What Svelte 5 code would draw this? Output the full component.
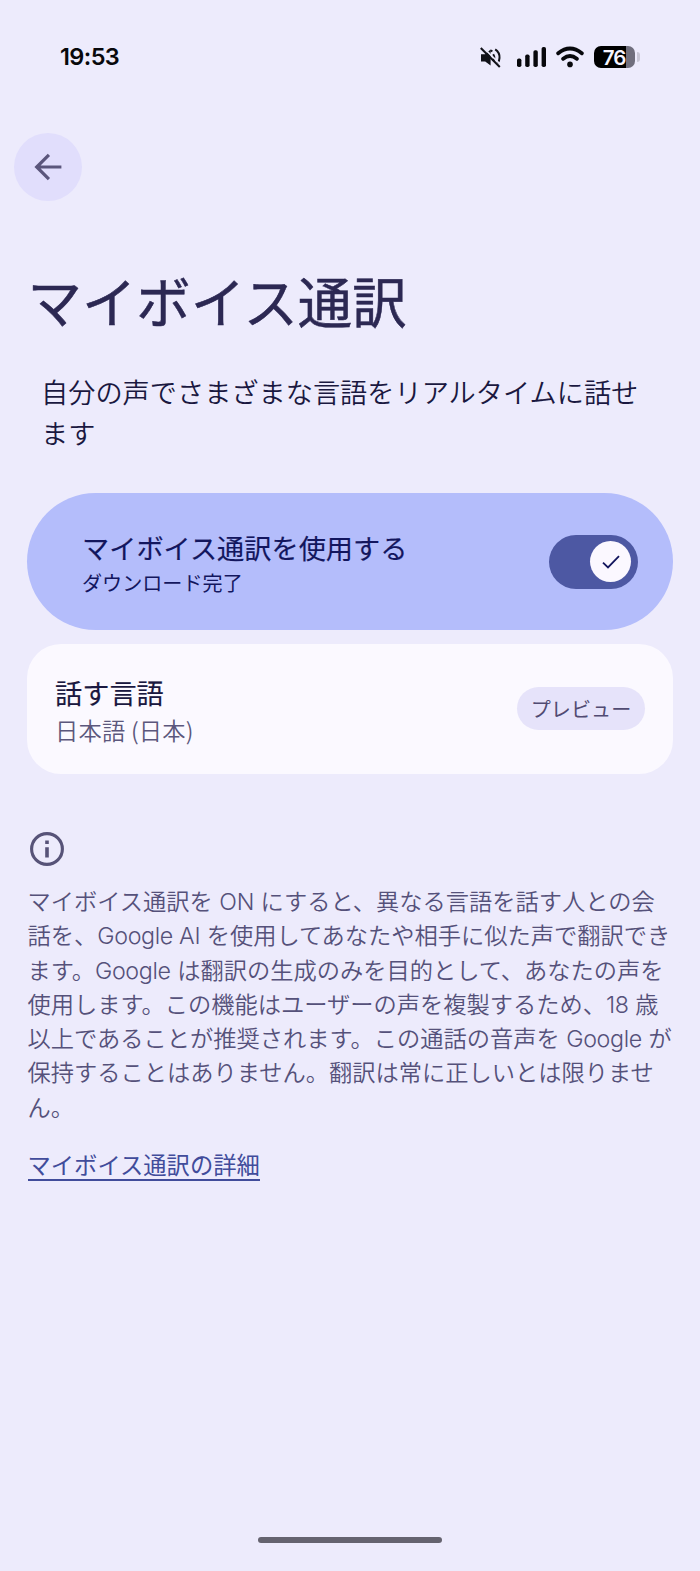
<script>
  let enabled = $state(true);
  const notice = [
    ['マイボイス通訳を ', 'ON', ' にすると、異なる言語を話す人との会'],
    ['話を、', 'Google AI', ' を使用してあなたや相手に似た声で翻訳でき'],
    ['ます。', 'Google', ' は翻訳の生成のみを目的として、あなたの声を'],
    ['使用します。この機能はユーザーの声を複製するため、', '18', ' 歳'],
    ['以上であることが推奨されます。この通話の音声を ', 'Google', ' が'],
    ['保持することはありません。翻訳は常に正しいとは限りませ', '', ''],
    ['ん。', '', '']
  ];
</script>

<div class="screen">
  <header class="status">
    <span class="time">19:53</span>
    <div class="indicators">
      <svg class="mute" width="22" height="22" viewBox="0 0 22 22" fill="none">
        <path d="M1 7.2h4.2L10.6 2.6V18.6L5.2 14.6H1Z" fill="#111118" />
        <path d="M13.2 7.2q2.2 3.5 0 7M15.2 2.4q4.6 3 4.3 8.5q-.1 3-1.8 5.2M10.4 3.4l2 .8" stroke="#111118" stroke-width="2" />
        <path d="M2.6 0L21.6 18.6" stroke="#edebfc" stroke-width="1.6" />
        <path d="M.8 1L19.8 20" stroke="#111118" stroke-width="2" />
      </svg>
      <svg class="signal" width="30" height="22" viewBox="0 0 30 22" fill="#08080c">
        <rect x="0" y="12.5" width="4.4" height="8.5" rx="1.8" />
        <rect x="8.2" y="8.5" width="4.4" height="12.5" rx="1.8" />
        <rect x="16.4" y="4.3" width="4.4" height="16.7" rx="1.8" />
        <rect x="24.6" y="1" width="4.4" height="20" rx="1.8" />
      </svg>
      <svg class="wifi" width="28" height="22" viewBox="0 0 28 22" fill="none" stroke="#08080c" stroke-width="3.9" stroke-linecap="round">
        <path d="M2.2 7.2Q14-2.2 25.8 7.2M7.2 12.8Q14 7.4 20.8 12.8" />
        <circle cx="14" cy="18.4" r="2.8" fill="#08080c" stroke="none" />
      </svg>
      <div class="battery"><span>76</span></div>
      <i class="nub"></i>
    </div>
  </header>

  <button class="back" aria-label="戻る">
    <svg width="28" height="28" viewBox="0 0 28 28" fill="none" stroke="#5b567c" stroke-width="3.2">
      <path d="M14.9 1.8L2.7 14L14.9 26.2M2.7 14H27.4" />
    </svg>
  </button>

  <h1>マイボイス通訳</h1>
  <p class="lead">自分の声でさまざまな言語をリアルタイムに話せ<br />ます</p>

  <section class="card use">
    <div class="labels">
      <h2>マイボイス通訳を使用する</h2>
      <p>ダウンロード完了</p>
    </div>
    <button class="switch" class:on={enabled} role="switch" aria-checked={enabled} aria-label="マイボイス通訳を使用する" onclick={() => (enabled = !enabled)}>
      <span class="thumb">
        <svg width="18" height="14" viewBox="0 0 18 14" fill="none" stroke="#13165e" stroke-width="1.8"><path d="M1 7.6L6 12.5L17 1.2" /></svg>
      </span>
    </button>
  </section>

  <section class="card language">
    <div class="labels">
      <h2>話す言語</h2>
      <p>日本語 (日本)</p>
    </div>
    <button class="preview">プレビュー</button>
  </section>

  <svg class="info" width="34" height="34" viewBox="0 0 34 34">
    <circle cx="17" cy="17" r="15.4" fill="none" stroke="#575378" stroke-width="3.1" />
    <path d="M15.2 8.5h3.6v3.6h-3.6zM15.2 15.2h3.6v10.3h-3.6z" fill="#575378" />
  </svg>

  <div class="notice">
    {#each notice as [before, latin, after]}
      <div>{before}{#if latin}<span class="latin">{latin}</span>{/if}{after}</div>
    {/each}
  </div>

  <div class="more"><a href="#details">マイボイス通訳の詳細</a></div>
  <div class="home"></div>
</div>

<style>
  :global(body) { margin: 0; background: #edebfc; }
  .screen {
    box-sizing: border-box;
    width: 700px;
    height: 1571px;
    padding: 40px 27px 28px;
    display: flex;
    flex-direction: column;
    background: #edebfc;
    color: #1a1840;
    font-family: Inter, "Noto Sans CJK JP", sans-serif;
    overflow: hidden;
  }
  h1, h2, p { margin: 0; font-weight: 400; white-space: nowrap; }
  button { border: 0; padding: 0; font: inherit; display: flex; align-items: center; }
  .status { height: 34px; display: flex; align-items: center; justify-content: space-between; padding: 0 32px 0 33px; }
  .time { font-size: 23.5px; line-height: 30px; margin-top: -1px; font-weight: 600; color: #08080c; letter-spacing: -.6px; }
  .indicators { display: flex; align-items: center; margin-right: 1px; }
  .mute { margin-top: 2px; }
  .signal { margin-left: 15px; }
  .wifi { margin-left: 9px; }
  .battery {
    margin-left: 10px; width: 41px; height: 22px; border-radius: 7px;
    background: linear-gradient(90deg, #000 32px, #706e7d 32px);
    display: flex; align-items: center; justify-content: center;
    color: #f6f4ff; font-size: 20.5px; font-weight: 600; letter-spacing: -1px;
  }
  .battery span { margin-right: 1px; }
  .nub { width: 3px; height: 10px; margin-left: 2px; border-radius: 0 3px 3px 0; background: #c9c7d7; }
  .back { margin: 59px 0 0 -13px; width: 68px; height: 68px; border-radius: 50%; background: #e1defc; justify-content: center; flex: none; }
  h1 { margin: 62px 0 0 .5px; font-size: 54.4px; line-height: 80px; font-weight: 400; color: #2c2853; -webkit-text-stroke: .5px #2c2853; }
  .lead { margin: 31px 0 0 14px; font-size: 27.2px; line-height: 40.5px; font-weight: 350; }
  .card { box-sizing: border-box; width: 646px; display: flex; align-items: center; justify-content: space-between; flex: none; }
  .use { margin-top: 38px; height: 137px; border-radius: 69px; background: #b4bdfb; padding: 0 35px 0 55px; color: #13165e; }
  .use .labels { padding-top: 9px; }
  .use h2 { font-size: 27.2px; line-height: 36px; -webkit-text-stroke: .15px; }
  .use p { font-size: 20.1px; line-height: 32px; }
  .switch { width: 89px; height: 54px; border-radius: 27px; background: #aaa8c3; padding: 0 7px; box-sizing: border-box; }
  .switch.on { background: #4d58a3; justify-content: flex-end; }
  .thumb { width: 41px; height: 41px; border-radius: 50%; background: #fbf8ff; display: flex; align-items: center; justify-content: center; }
  .language { margin-top: 14px; height: 130px; border-radius: 34px; background: #fbf9ff; padding: 0 28px 0 28px; }
  .language .labels { padding-top: 5px; }
  .language h2 { font-size: 27.2px; line-height: 37px; -webkit-text-stroke: .15px; }
  .language p { font-size: 23.3px; line-height: 34px; color: #5b577c; font-family: "Noto Sans CJK JP", sans-serif; font-weight: 350; letter-spacing: .2px; }
  .preview { width: 128px; height: 43px; border-radius: 22px; background: #e6e3fa; justify-content: center; color: #514b72; font-size: 20.1px; margin-top: -1px; }
  .info { margin: 58px 0 0 3px; flex: none; }
  .notice { margin: 19px 0 0 .5px; font-size: 23.25px; line-height: 34.3px; color: #55517a; white-space: nowrap; font-weight: 350; }
  .latin { letter-spacing: -.35px; font-weight: 300; }
  .more { margin: 24px 0 0 .5px; font-size: 23.3px; line-height: 34px; }
  a { display: inline-block; color: #414c9b; text-decoration: none; border-bottom: 2px solid #414c9b; line-height: 27px; }
  .home { width: 184px; height: 6px; border-radius: 3px; background: #65636f; margin: auto auto 0; }
</style>
